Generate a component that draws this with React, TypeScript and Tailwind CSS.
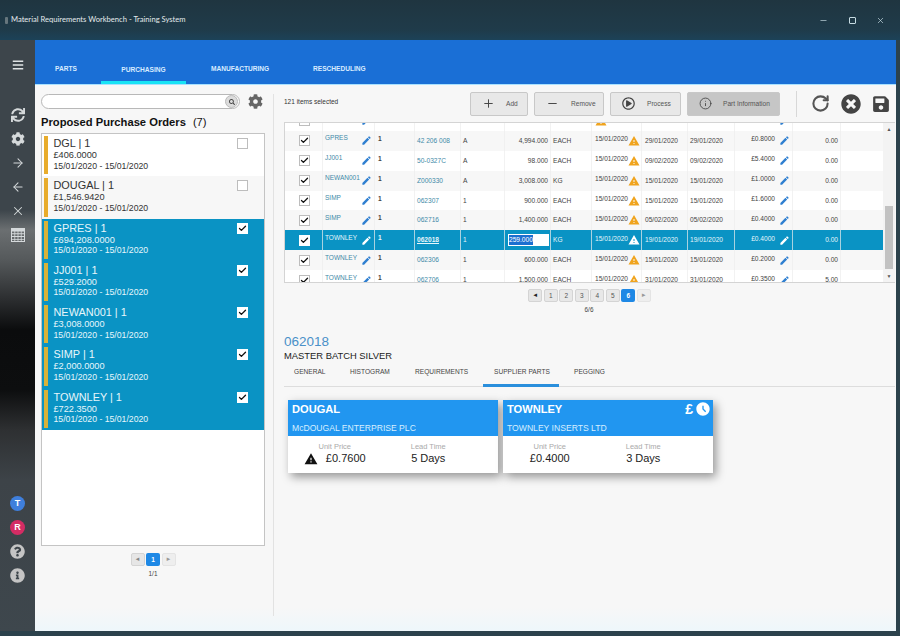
import { ArrowLeft, ArrowRight, Check, Info, Minus, Plus, RotateCw, X } from "lucide-react";
import { FaBars, FaCog, FaInfoCircle, FaQuestionCircle, FaRegPlayCircle, FaSave, FaSearch, FaSync, FaTimesCircle } from "react-icons/fa";
import { MdAccessTimeFilled, MdEdit, MdWarning } from "react-icons/md";

const ORDERS = [
  { name: "DGL | 1", total: "£406.0000", checked: false },
  { name: "DOUGAL | 1", total: "£1,546.9420", checked: false, band: true },
  { name: "GPRES | 1", total: "£694,208.0000", checked: true },
  { name: "JJ001 | 1", total: "£529.2000", checked: true },
  { name: "NEWAN001 | 1", total: "£3,008.0000", checked: true },
  { name: "SIMP | 1", total: "£2,000.0000", checked: true },
  { name: "TOWNLEY | 1", total: "£722.3500", checked: true },
];

const ROWS = [
  { supplier: "", num: "", part: "", rev: "", qty: "", unit: "", d1: "", d2: "", d3: "", price: "", amount: "" },
  { supplier: "GPRES", num: "1", part: "42 206 008", rev: "A", qty: "4,994.000", unit: "EACH", d1: "15/01/2020", d2: "29/01/2020", d3: "29/01/2020", price: "£0.8000", amount: "0.00" },
  { supplier: "JJ001", num: "1", part: "50-0327C", rev: "A", qty: "98.000", unit: "EACH", d1: "15/01/2020", d2: "09/02/2020", d3: "09/02/2020", price: "£5.4000", amount: "0.00" },
  { supplier: "NEWAN001", num: "1", part: "Z000330", rev: "A", qty: "3,008.000", unit: "KG", d1: "15/01/2020", d2: "15/01/2020", d3: "15/01/2020", price: "£1.0000", amount: "0.00" },
  { supplier: "SIMP", num: "1", part: "062307", rev: "1", qty: "900.000", unit: "EACH", d1: "15/01/2020", d2: "15/01/2020", d3: "15/01/2020", price: "£1.6000", amount: "0.00" },
  { supplier: "SIMP", num: "1", part: "062716", rev: "1", qty: "1,400.000", unit: "EACH", d1: "15/01/2020", d2: "05/02/2020", d3: "05/02/2020", price: "£0.4000", amount: "0.00" },
  { supplier: "TOWNLEY", num: "1", part: "062018", rev: "1", qty: "259.000", unit: "KG", d1: "15/01/2020", d2: "19/01/2020", d3: "19/01/2020", price: "£0.4000", amount: "0.00", selected: true },
  { supplier: "TOWNLEY", num: "1", part: "062306", rev: "1", qty: "600.000", unit: "EACH", d1: "15/01/2020", d2: "15/01/2020", d3: "15/01/2020", price: "£0.2000", amount: "0.00" },
  { supplier: "TOWNLEY", num: "1", part: "062706", rev: "1", qty: "1,500.000", unit: "EACH", d1: "15/01/2020", d2: "31/01/2020", d3: "31/01/2020", price: "£0.3500", amount: "5.00" },
];

function Pager({ pages, current }: { pages: number[]; current: number }) {
  const isLast = current === pages[pages.length - 1];
  return (
    <div className="flex justify-center gap-[1.5px]">
      <button className={`flex h-[13px] w-[14px] items-center justify-center rounded-[2px] border border-[#d4d4d4] bg-[#e6e6e6] text-[6px] ${pages.length > 1 ? "text-[#222]" : "text-[#888]"}`}>◄</button>
      {pages.map((page) => (
        <button
          key={page}
          className={`flex h-[13px] w-[14px] items-center justify-center rounded-[2px] text-[6.5px] ${page === current ? "bg-[#1e88e5] font-bold text-white" : "border border-[#d4d4d4] bg-[#e8e8e8] text-[#555]"}`}
        >
          {page}
        </button>
      ))}
      <button className={`flex h-[13px] w-[14px] items-center justify-center rounded-[2px] border border-[#e4e4e4] bg-[#eeeeee] text-[6px] ${isLast ? "text-[#999]" : "text-[#222]"}`}>►</button>
    </div>
  );
}

function ToolButton({ icon, label, width, active }: { icon: React.ReactNode; label: string; width: string; active?: boolean }) {
  return (
    <button className={`flex h-[24px] items-center rounded-[2px] border border-[#c8c8c8] text-[6.6px] text-[#555] ${width} ${active ? "bg-[#c6c6c6]" : "bg-[#e8e8e8]"}`}>
      {icon}
      <span>{label}</span>
    </button>
  );
}

function SupplierCard({ code, name, price, days, warn, best }: { code: string; name: string; price: string; days: string; warn?: boolean; best?: boolean }) {
  return (
    <div className="h-[73px] w-[210px] bg-white shadow-[3px_4px_9px_rgba(0,0,0,0.4)]">
      <div className="flex h-[36px] flex-col bg-[#2196f0] pl-[4px] pr-[2px] text-white">
        <div className="flex items-start justify-between">
          <span className="mt-[3px] text-[11.1px] font-bold leading-[13px]">{code}</span>
          {best ? (
            <span className="mt-[1px] flex items-center gap-[2px] text-[14px] font-bold leading-[17px]">
              £<MdAccessTimeFilled className="h-[16px] w-[16px]" />
            </span>
          ) : null}
        </div>
        <span className="mt-auto mb-[2px] text-[8.6px] leading-[12px] text-[#d6eeff]">{name}</span>
      </div>
      <div className="grid w-[187px] grid-cols-2 pt-[6px] text-center">
        <div className="flex flex-col items-center">
          <span className="text-[7.5px] leading-[10px] text-[#aaaaaa]">Unit Price</span>
          <span className="flex items-center gap-[8px] text-[11px] leading-[13px] text-[#222]">
            {warn ? <MdWarning className="h-[14px] w-[14px] text-[#111]" /> : null}
            {price}
          </span>
        </div>
        <div className="flex flex-col items-center">
          <span className="text-[7.5px] leading-[10px] text-[#aaaaaa]">Lead Time</span>
          <span className="text-[11px] leading-[13px] text-[#222]">{days}</span>
        </div>
      </div>
    </div>
  );
}

export default function App() {
  return (
    <div className="flex h-[636px] w-[900px] flex-col overflow-hidden bg-[#2c424c] font-['Liberation_Sans',Arial,sans-serif]">
      {/* title bar */}
      <div className="flex h-[40px] shrink-0 items-center bg-[linear-gradient(180deg,#1f3540,#1f3b4a_75%,#1c4258)] pl-[5px] text-white">
        <span className="mr-[3px] h-[7px] w-[3px] rounded-[1px] bg-[#66767d]" />
        <span className="font-['Lato',sans-serif] text-[7.6px] text-[#e4eaec]">Material Requirements Workbench - Training System</span>
        <div className="ml-auto flex items-center gap-[20.5px] pr-[15px] text-[#c6dbe2]">
          <Minus className="h-[9px] w-[9px]" strokeWidth={1.8} />
          <span className="h-[7px] w-[7px] rounded-[1px] border border-[#c6dbe2]" />
          <X className="h-[9px] w-[9px]" strokeWidth={1.8} />
        </div>
      </div>

      <div className="flex min-h-0 flex-1 pb-[5px] pr-[4px]">
        {/* sidebar */}
        <div className="flex w-[35px] shrink-0 flex-col items-center bg-[linear-gradient(180deg,#3d454b_0px,#3d454b_170px,#6b6f71_190px,#55595b_220px,#2b2d2f_260px,#0b0c0d_290px,#0d0e0f_350px,#2e3032_390px,#3d4348_440px,#3e474d_596px)] pt-[19px] text-[#dfe3e5]">
          <FaBars className="h-[12px] w-[12px]" />
          <div className="mt-[37px] flex flex-col items-center gap-[10px] text-[#d5d9db]">
            <FaSync className="h-[14px] w-[14px]" />
            <FaCog className="h-[14px] w-[14px]" />
            <ArrowRight className="h-[14px] w-[14px]" strokeWidth={1.8} />
            <ArrowLeft className="h-[14px] w-[14px]" strokeWidth={1.8} />
            <X className="h-[14px] w-[14px]" strokeWidth={1.8} />
            <svg viewBox="0 0 14 14" className="h-[14px] w-[14px]" fill="currentColor">
              <path d="M0 0h14v14H0z M1 3.5v1.8h2.4V3.5z M4.2 3.5v1.8h2.4V3.5z M7.4 3.5v1.8h2.4V3.5z M10.6 3.5v1.8H13V3.5z M1 6.3v1.8h2.4V6.3z M4.2 6.3v1.8h2.4V6.3z M7.4 6.3v1.8h2.4V6.3z M10.6 6.3v1.8H13V6.3z M1 9.1v1.8h2.4V9.1z M4.2 9.1v1.8h2.4V9.1z M7.4 9.1v1.8h2.4V9.1z M10.6 9.1v1.8H13V9.1z M1 11.7V13h2.4v-1.3z M4.2 11.7V13h2.4v-1.3z M7.4 11.7V13h2.4v-1.3z M10.6 11.7V13H13v-1.3z" fillRule="evenodd" />
            </svg>
          </div>
          <div className="mt-auto mb-[48px] flex flex-col items-center gap-[9px]">
            <span className="flex h-[15px] w-[15px] items-center justify-center rounded-full bg-[#3f7fdc] text-[9px] font-bold text-white">T</span>
            <span className="flex h-[15px] w-[15px] items-center justify-center rounded-full bg-[#d42c64] text-[9px] font-bold text-white">R</span>
            <FaQuestionCircle className="h-[15px] w-[15px] text-[#c4c4c4]" />
            <FaInfoCircle className="h-[15px] w-[15px] text-[#c4c4c4]" />
          </div>
        </div>

        {/* main */}
        <div className="flex min-w-0 flex-1 flex-col bg-[linear-gradient(180deg,#f7f7f7_96%,#eef7fb)]">
          <div className="flex h-[45px] shrink-0 items-end border-b border-[#a9e1ff] bg-[#1a6fd6]">
            <div className="flex items-end pl-[20px] text-[6.6px] font-bold text-[#d8ecff]">
              <span className="w-[46px] pb-[10px]">PARTS</span>
              <span className="flex h-[19px] w-[85px] justify-center border-b-[3px] border-[#18e3f5]">PURCHASING</span>
              <span className="w-[127px] pb-[10px] pl-[25px]">MANUFACTURING</span>
              <span className="pb-[10px]">RESCHEDULING</span>
            </div>
          </div>

          <div className="flex min-h-0 flex-1">
            {/* left column */}
            <div className="flex w-[238px] shrink-0 flex-col pl-[6px] pt-[9px]">
              <div className="flex items-center">
                <div className="flex h-[15px] w-[199px] items-center justify-end rounded-full border border-[#b8b8b8] bg-white pr-[1px]">
                  <span className="flex h-[13px] w-[13px] items-center justify-center rounded-full border border-[#bbbbbb] bg-[#dcdcdc]">
                    <FaSearch className="h-[6px] w-[6px] text-[#444]" />
                  </span>
                </div>
                <FaCog className="ml-[8px] h-[15px] w-[15px] text-[#666]" />
              </div>
              <div className="mt-[7px] flex h-[14px] items-center text-[11.2px] font-bold leading-none text-[#111]">
                Proposed Purchase Orders
                <span className="ml-[7px] font-normal">(7)</span>
              </div>
              <div className="mt-[3px] h-[413px] w-[224px] border border-[#c4c4c4] bg-white">
                {ORDERS.map((order) => (
                  <div
                    key={order.name}
                    className={`flex h-[42.3px] py-[2px] pl-[2px] ${order.checked ? "bg-[#0a93c4] text-[#e6f6fb]" : order.band ? "bg-[#f7f7f7] text-[#333]" : "bg-white text-[#333]"}`}
                  >
                    <span className={`w-[3.5px] shrink-0 ${order.checked ? "bg-[#d8b23a]" : "bg-[#e8ac2c]"}`} />
                    <div className="ml-[6px] flex flex-col">
                      <span className="text-[10.9px] leading-[14px]">{order.name}</span>
                      <span className="text-[9.2px] leading-[10.5px]">{order.total}</span>
                      <span className="text-[8.7px] leading-[10.5px]">15/01/2020 - 15/01/2020</span>
                    </div>
                    <span className={`ml-auto mr-[16px] mt-[2px] flex h-[11px] w-[11px] items-center justify-center ${order.checked ? "bg-white" : "border border-[#bdbdbd] bg-white"}`}>
                      {order.checked ? <Check className="h-[9px] w-[9px] text-[#111]" strokeWidth={3.5} /> : null}
                    </span>
                  </div>
                ))}
              </div>
              <div className="mt-[7px] w-[224px]">
                <Pager pages={[1]} current={1} />
                <div className="mt-[3px] text-center text-[6.4px] text-[#444]">1/1</div>
              </div>
            </div>

            <span className="mb-[15px] mt-[9px] w-px shrink-0 bg-[#e2e2e2]" />

            {/* right column */}
            <div className="flex min-w-0 flex-1 flex-col pl-[10px] pr-[1px]">
              <div className="flex h-[37px] shrink-0 items-center">
                <span className="w-[186px] pb-[4px] text-[6.5px] text-[#333]">121 items selected</span>
                <div className="flex items-center gap-[6px]">
                  <ToolButton width="w-[58px]" label="Add" icon={<Plus className="ml-[11px] mr-[11px] h-[13px] w-[13px] text-[#444]" strokeWidth={1.8} />} />
                  <ToolButton width="w-[70px]" label="Remove" icon={<Minus className="ml-[11px] mr-[12px] h-[13px] w-[13px] text-[#444]" strokeWidth={1.8} />} />
                  <ToolButton width="w-[71px]" label="Process" icon={<FaRegPlayCircle className="ml-[11px] mr-[12px] h-[13px] w-[13px] text-[#444]" />} />
                  <ToolButton width="w-[93px]" label="Part Information" active icon={<Info className="ml-[11px] mr-[11px] h-[13px] w-[13px] text-[#444]" strokeWidth={1.6} />} />
                </div>
                <span className="ml-[16px] h-[26px] w-px bg-[#d8d8d8]" />
                <div className="ml-[14px] flex items-center gap-[11px] text-[#444]">
                  <RotateCw className="h-[19px] w-[19px] text-[#555]" strokeWidth={2.6} />
                  <FaTimesCircle className="h-[20px] w-[20px]" />
                  <FaSave className="h-[18px] w-[18px]" />
                </div>
              </div>

              {/* grid */}
              <div className="flex h-[161px] shrink-0 overflow-hidden border-y border-l border-[#d4d4d4] bg-white">
                <div className="min-w-0 flex-1">
                  <div className="-mt-[12px]">
                    {ROWS.map((row, i) => (
                      <div
                        key={i}
                        className={`grid h-[19.9px] grid-cols-[38px_52px_40px_46px_44px_46px_41px_50px_46px_47px_58px_48px_42px] items-center text-[6.6px] ${row.selected ? "bg-[#0a93c4] text-[#e6f6fb]" : i % 2 === 1 ? "bg-[#f7f7f7] text-[#444]" : "bg-white text-[#444]"}`}
                      >
                        <div className="flex h-full items-center justify-center border-r border-[#ececec]/70 pl-[1px]">
                          <span className={`flex h-[11px] w-[11px] items-center justify-center border bg-white ${row.selected ? "border-white" : "border-[#bdbdbd]"}`}>
                            <Check className="h-[9px] w-[9px] text-[#111]" strokeWidth={3.5} />
                          </span>
                        </div>
                        <div className="flex h-full items-center justify-between border-r border-[#ececec]/70 pl-[2px] pr-[2px]">
                          <span className={`-mt-[5px] text-[6.5px] ${row.selected ? "text-[#e6f6fb]" : "text-[#3f8aa8]"}`}>{row.supplier}</span>
                          <MdEdit className={`h-[11px] w-[11px] shrink-0 ${row.selected ? "text-white" : "text-[#2f7fd0]"}`} />
                        </div>
                        <div className="flex h-full border-r border-[#ececec]/70 pl-[3px] pt-[3px] font-bold">{row.num}</div>
                        <div className={`flex h-full items-center border-r border-[#ececec]/70 pl-[2px] ${row.selected ? "font-bold underline" : "text-[#3f8aa8]"}`}>{row.part}</div>
                        <div className="flex h-full items-center border-r border-[#ececec]/70 pl-[2px]">{row.rev}</div>
                        <div className="flex h-full items-center justify-end border-r border-[#ececec]/70 pr-[2px]">
                          {row.selected ? (
                            <span className="mr-[-1px] flex h-[12px] w-[41px] items-center bg-white pl-[1px] text-[6.6px] text-[#222]">
                              <span className="bg-[#1c6fd0] text-white">{row.qty}</span>
                            </span>
                          ) : (
                            row.qty
                          )}
                        </div>
                        <div className="flex h-full items-center border-r border-[#ececec]/70 pl-[2px]">{row.unit}</div>
                        <div className="flex h-full items-center border-r border-[#ececec]/70 pl-[3px]">
                          <span className="-mt-[3px]">{row.d1}</span>
                          <MdWarning className={`h-[12px] w-[12px] shrink-0 ${row.selected ? "text-white" : "text-[#f0a41e]"}`} />
                        </div>
                        <div className="flex h-full items-center border-r border-[#ececec]/70 pl-[3px]">{row.d2}</div>
                        <div className="flex h-full items-center border-r border-[#ececec]/70 pl-[2px]">{row.d3}</div>
                        <div className="flex h-full items-center justify-end border-r border-[#ececec]/70 pr-[2px]">
                          <span className="-mt-[3px] mr-[4px]">{row.price}</span>
                          <MdEdit className={`h-[11px] w-[11px] shrink-0 ${row.selected ? "text-white" : "text-[#2f7fd0]"}`} />
                        </div>
                        <div className="flex h-full items-center justify-end border-r border-[#ececec]/70 pr-[2px]">{row.amount}</div>
                        <div />
                      </div>
                    ))}
                  </div>
                </div>
                <div className="flex w-[12px] shrink-0 flex-col items-center bg-[#f3f3f3] text-[5px] text-[#555]">
                  <span className="mt-[2px] h-[8px] leading-[8px]">▲</span>
                  <span className="mt-[73px] h-[63px] w-[8px] bg-[#c2c2c2]" />
                  <span className="mt-[3px] h-[8px] leading-[8px]">▼</span>
                </div>
              </div>

              <div className="mt-[6px]">
                <Pager pages={[1, 2, 3, 4, 5, 6]} current={6} />
                <div className="mt-[3px] pr-[1px] text-center text-[6.4px] text-[#444]">6/6</div>
              </div>

              <div className="mt-[19px] text-[13.5px] leading-[16px] text-[#4a90c8]">062018</div>
              <div className="text-[9.4px] leading-[11px] text-[#222]">MASTER BATCH SILVER</div>
              <div className="mt-[1px] flex h-[25px] items-start border-b border-[#dddddd] pl-[10px] text-[6.6px] text-[#444]">
                <span className="w-[56px] pt-[5px]">GENERAL</span>
                <span className="w-[65px] pt-[5px]">HISTOGRAM</span>
                <span className="w-[68px] pt-[5px]">REQUIREMENTS</span>
                <span className="h-[25px] w-[76px] border-b-[3px] border-[#2a8fdc] pl-[11px] pt-[5px]">SUPPLIER PARTS</span>
                <span className="pl-[15px] pt-[5px]">PEGGING</span>
              </div>

              <div className="mt-[13px] flex gap-[5px] pl-[4px]">
                <SupplierCard code="DOUGAL" name="McDOUGAL ENTERPRISE PLC" price="£0.7600" days="5 Days" warn />
                <SupplierCard code="TOWNLEY" name="TOWNLEY INSERTS LTD" price="£0.4000" days="3 Days" best />
              </div>
            </div>
          </div>
        </div>
      </div>
    </div>
  );
}
